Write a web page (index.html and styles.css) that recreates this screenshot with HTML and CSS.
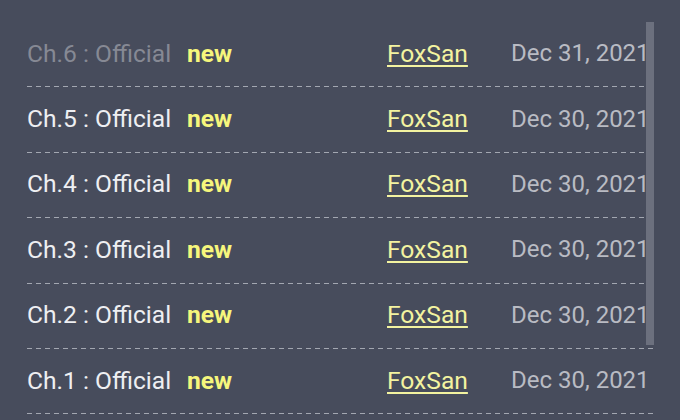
FILE: index.html
```html
<!DOCTYPE html>
<html>
<head>
<meta charset="utf-8">
<title>chapters</title>
<link rel="stylesheet" href="styles.css">
</head>
<body>
  <div class="chapter-box">
    <ul class="chapter-list">
      <li class="chapter-row read">
        <span class="ch-title">Ch.6 : Official</span>
        <span class="ch-new">new</span>
        <a class="ch-group" href="#">FoxSan</a>
        <span class="ch-date">Dec 31, 2021</span>
      </li>
      <li class="chapter-row">
        <span class="ch-title">Ch.5 : Official</span>
        <span class="ch-new">new</span>
        <a class="ch-group" href="#">FoxSan</a>
        <span class="ch-date">Dec 30, 2021</span>
      </li>
      <li class="chapter-row">
        <span class="ch-title">Ch.4 : Official</span>
        <span class="ch-new">new</span>
        <a class="ch-group" href="#">FoxSan</a>
        <span class="ch-date">Dec 30, 2021</span>
      </li>
      <li class="chapter-row">
        <span class="ch-title">Ch.3 : Official</span>
        <span class="ch-new">new</span>
        <a class="ch-group" href="#">FoxSan</a>
        <span class="ch-date">Dec 30, 2021</span>
      </li>
      <li class="chapter-row">
        <span class="ch-title">Ch.2 : Official</span>
        <span class="ch-new">new</span>
        <a class="ch-group" href="#">FoxSan</a>
        <span class="ch-date">Dec 30, 2021</span>
      </li>
      <li class="chapter-row">
        <span class="ch-title">Ch.1 : Official</span>
        <span class="ch-new">new</span>
        <a class="ch-group" href="#">FoxSan</a>
        <span class="ch-date">Dec 30, 2021</span>
      </li>
    </ul>
    <div class="scroll-thumb"></div>
  </div>
</body>
</html>
```

FILE: styles.css
```css
html, body { margin: 0; padding: 0; background: #474c5c; height: 100%; overflow: hidden; }
body { font-family: Roboto, "Liberation Sans", Arial, sans-serif; font-size: 24.6px; }

.chapter-box { position: relative; padding: 22px 27px 0 27px; }
.chapter-list { list-style: none; margin: 0; padding: 0; width: 626px; }
.chapter-row {
  display: grid;
  grid-template-columns: 160px 200px 124px 1fr;
  align-items: center;
  height: 65.4px;
  box-sizing: border-box;
  padding-bottom: 3px;
  white-space: nowrap;
  color: #eeeff2;
  background-image: repeating-linear-gradient(to right, #a3a7b1 0 5px, transparent 5px 9px);
  background-size: 100% 1px;
  background-position: left bottom;
  background-repeat: no-repeat;
}
.chapter-row.read .ch-title { color: #868994; }
.ch-new { color: #f6f67c; font-weight: bold; }
.ch-group { color: #f3f3a0; text-decoration: underline; text-underline-offset: 3px; }
.ch-date { color: #b9bbc3; font-size: 24px; }

.scroll-thumb { position: absolute; left: 646px; top: 22px; width: 8px; height: 323px; background: #6c707e; }
```
